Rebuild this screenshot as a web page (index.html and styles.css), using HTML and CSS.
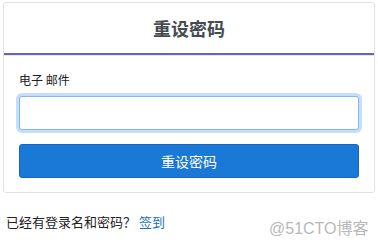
FILE: index.html
```html
<!DOCTYPE html>
<html>
<head>
    <meta charset="utf-8">
    <meta name="viewport" content="width=device-width, initial-scale=1">
    <title>重设密码</title>
    <link rel="stylesheet" href="styles.css">
</head>
<body>
    <div class="card">
        <div class="card-header">重设密码</div>
        <div class="card-body">
            <label class="field-label" for="email">电子 邮件</label>
            <input class="field-input" id="email" type="email">
            <button class="submit-button">重设密码</button>
        </div>
    </div>

    <div class="signin-line">
        已经有登录名和密码？ <a class="signin-link" href="#">签到</a>
    </div>

    <div class="watermark">@51CTO博客</div>
</body>
</html>
```

FILE: styles.css
```css
:root {
    --text-color: #333333;
    --title-color: #464b50;
    --border-color: #e2e2e2;
    --accent-line: #6464c8;
    --blue: #1a78d6;
    --link: #1a6fc0;
}

* {
    margin: 0;
    padding: 0;
    box-sizing: border-box;
    font-family: "Noto Sans CJK SC", "Noto Sans", sans-serif;
}

body {
    background-color: #ffffff;
    color: var(--text-color);
    padding: 2px 3px 0 3px;
    width: 378px;
    height: 249px;
    overflow: hidden;
    position: relative;
}

.card {
    width: 372px;
    border: 1px solid var(--border-color);
    border-radius: 3px;
}

.card-header {
    height: 52px;
    display: flex;
    align-items: center;
    justify-content: center;
    font-size: 18px;
    font-weight: 700;
    color: var(--title-color);
    border-bottom: 2px solid var(--accent-line);
    box-shadow: 0 1px 0 #e6e6e6;
}

.card-body {
    padding: 16px 15px 14px 15px;
    display: flex;
    flex-direction: column;
}

.field-label {
    font-size: 12px;
    line-height: 18px;
    color: #222222;
    margin-bottom: 7px;
}

.field-input {
    height: 34px;
    width: 100%;
    border: 1px solid #80b8f5;
    border-radius: 3px;
    box-shadow: 0 0 0 3px rgba(90, 160, 250, 0.35);
    outline: none;
    background: #ffffff;
}

.submit-button {
    margin-top: 14px;
    height: 34px;
    width: 100%;
    background-color: var(--blue);
    border: 1px solid #1565c0;
    border-radius: 3px;
    color: #ffffff;
    font-size: 14px;
    cursor: pointer;
}

.signin-line {
    margin-top: 20px;
    padding-left: 3px;
    font-size: 13px;
    line-height: 18px;
    color: #222222;
}

.signin-link {
    color: var(--link);
    text-decoration: none;
}

.watermark {
    position: absolute;
    left: 269px;
    top: 219px;
    font-size: 16px;
    line-height: 20px;
    color: #b8b8b8;
    font-family: "Liberation Sans", "Noto Sans CJK SC", sans-serif;
}
```
